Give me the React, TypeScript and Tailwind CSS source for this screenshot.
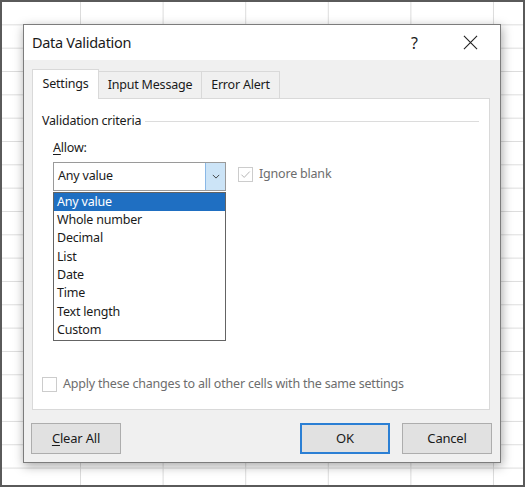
import React from "react";

const items = ["Any value", "Whole number", "Decimal", "List", "Date", "Time", "Text length", "Custom"];

function Check({ className = "" }: { className?: string }) {
  return (
    <svg viewBox="0 0 16 16" className={className} fill="none">
      <path d="M3 8.2 L6.4 11.6 L13.2 4.4" stroke="#b4b4b4" strokeWidth="1.2" />
    </svg>
  );
}

export default function App() {
  return (
    <div
      className="relative w-[525px] h-[487px] overflow-hidden border-2 border-[#5a5a5a] bg-white bg-[linear-gradient(to_right,transparent_calc(100%-1px),#dcdcdc_calc(100%-1px)),linear-gradient(to_bottom,transparent_calc(100%-1px),#dcdcdc_calc(100%-1px))] bg-[size:82.6px_23.33px] bg-[position:-3.6px_0px] text-[#1a1a1a]"
      style={{ fontFamily: '"Noto Sans", "Open Sans", sans-serif' }}
    >
      <div className="absolute left-[21px] top-[22px] flex h-[439px] w-[478px] flex-col border border-[#7c7c7c] bg-[#f0f0f0] shadow-[1px_3px_10px_rgba(0,0,0,0.35)]">
        {/* title bar */}
        <div className="flex h-[35px] items-center bg-white pl-[8px] pr-[22px]">
          <span className="text-[14.5px] leading-none tracking-[-0.3px]">Data Validation</span>
          <span className="ml-auto mr-[45px] text-[16px] leading-none">?</span>
          <svg viewBox="0 0 16 16" className="h-[15px] w-[15px]" fill="none">
            <path d="M1 1 L15 15 M15 1 L1 15" stroke="#222" strokeWidth="1.2" />
          </svg>
        </div>
        {/* body */}
        <div className="flex flex-1 flex-col px-[8px] pt-[9px] text-[12.5px] tracking-[-0.2px]">
          {/* tabs */}
          <div className="flex items-end">
            <div className="relative z-10 -mb-px flex h-[30px] w-[67px] items-center justify-center border border-b-0 border-[#d9d9d9] bg-white">
              Settings
            </div>
            <div className="flex h-[27px] w-[103px] items-center justify-center border border-l-0 border-b-0 border-[#d9d9d9] bg-[#f0f0f0]">
              Input Message
            </div>
            <div className="flex h-[27px] w-[78px] items-center justify-center border border-l-0 border-b-0 border-[#d9d9d9] bg-[#f0f0f0]">
              Error Alert
            </div>
          </div>
          {/* panel */}
          <div className="relative flex h-[312px] w-[458px] flex-col border border-[#d9d9d9] bg-white pl-[9px] pr-[10px] pt-[13px]">
            <div className="flex items-center">
              <span className="leading-[18px]">Validation criteria</span>
              <div className="ml-[4px] h-px flex-1 bg-[#dcdcdc]" />
            </div>
            <div className="ml-[11px] mt-[9px] leading-[18px]">
              <span className="underline underline-offset-2">A</span>llow:
            </div>
            <div className="ml-[11px] mt-[5px] flex items-start">
              <div className="flex h-[29px] w-[173px] border border-[#9a9a9a] bg-white">
                <div className="flex flex-1 items-center pl-[4px]">Any value</div>
                <div className="flex w-[20px] items-center justify-center border-l border-[#8ab8e6] bg-[#cce4f7]">
                  <svg viewBox="0 0 10 6" className="h-[5px] w-[8px]" fill="none">
                    <path d="M1 1 L5 5 L9 1" stroke="#333" strokeWidth="1.1" />
                  </svg>
                </div>
              </div>
              <div className="ml-[12px] mt-[3px] flex items-center">
                <div className="flex h-[15px] w-[15px] items-center justify-center border border-[#cccccc] bg-white">
                  <Check className="h-[13px] w-[13px]" />
                </div>
                <span className="ml-[6px] text-[#6d6d6d]">Ignore blank</span>
              </div>
            </div>
            {/* dropdown list */}
            <div className="absolute left-[20px] top-[93px] z-20 flex w-[173px] flex-col border border-[#646464] bg-white pb-[1px]">
              {items.map((it, i) => (
                <div
                  key={it}
                  className={
                    i === 0
                      ? "flex h-[18.3px] items-center bg-[#1f6fc2] pl-[3px] text-white"
                      : "flex h-[18.3px] items-center pl-[3px]"
                  }
                >
                  {it}
                </div>
              ))}
            </div>
            <div className="mt-auto mb-[15px] flex items-center">
              <div className="h-[15px] w-[15px] border border-[#cccccc] bg-white" />
              <span className="ml-[6px] text-[#6d6d6d]">Apply these changes to all other cells with the same settings</span>
            </div>
          </div>
          {/* buttons */}
          <div className="mt-[13px] flex items-center text-[13px]">
            <button className="-ml-px flex h-[31px] w-[90px] items-center justify-center border border-[#adadad] bg-[#e1e1e1]">
              <span><span className="underline underline-offset-2">C</span>lear All</span>
            </button>
            <button className="ml-auto flex h-[31px] w-[90px] items-center justify-center border-2 border-[#2b7fd4] bg-[#e1e1e1]">
              OK
            </button>
            <button className="ml-[12px] flex h-[31px] w-[90px] items-center justify-center border border-[#adadad] bg-[#e1e1e1]">
              Cancel
            </button>
          </div>
        </div>
      </div>
    </div>
  );
}
